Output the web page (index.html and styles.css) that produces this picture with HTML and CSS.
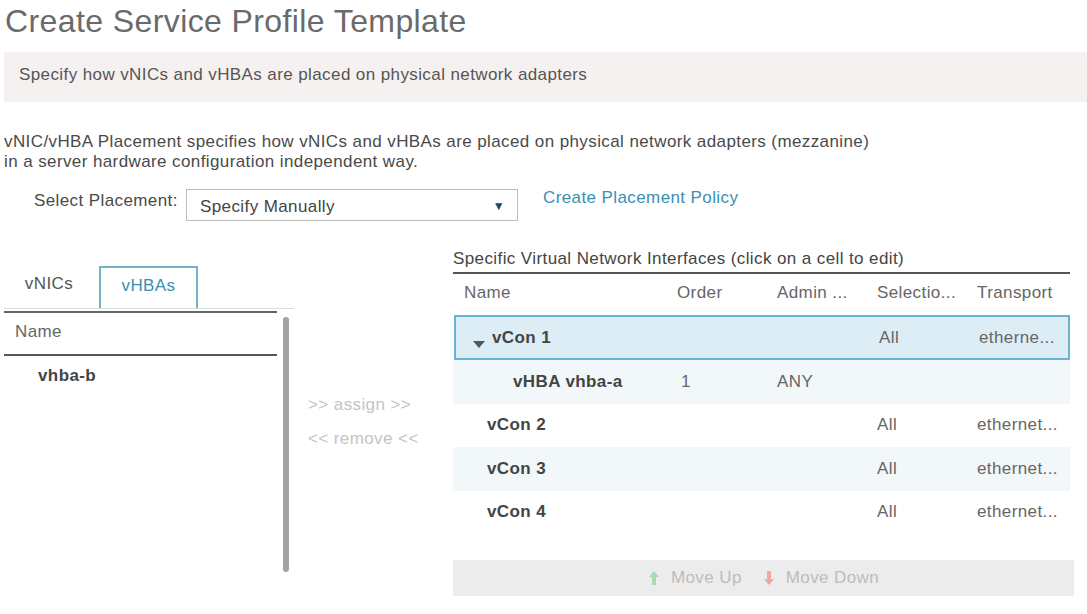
FILE: index.html
```html
<!DOCTYPE html>
<html>
<head>
<meta charset="utf-8">
<link rel="stylesheet" href="styles.css">
</head>
<body>
<div class="page">
  <h1 class="title">Create Service Profile Template</h1>
  <div class="banner">Specify how vNICs and vHBAs are placed on physical network adapters</div>
  <p class="desc">vNIC/vHBA Placement specifies how vNICs and vHBAs are placed on physical network adapters (mezzanine)<br>in a server hardware configuration independent way.</p>
  <div class="placement">
    <span class="plabel">Select Placement:</span>
    <div class="select"><span>Specify Manually</span><span class="caret">&#9660;</span></div>
    <a class="link">Create Placement Policy</a>
  </div>
  <div class="main">
    <div class="left">
      <div class="tabs">
        <div class="tab">vNICs</div>
        <div class="tab active">vHBAs</div>
      </div>
      <div class="listwrap">
        <div class="list">
          <div class="lhead">Name</div>
          <div class="litem">vhba-b</div>
        </div>
        <div class="scroll"></div>
      </div>
    </div>
    <div class="mid">
      <div class="mbtn">&gt;&gt; assign &gt;&gt;</div>
      <div class="mbtn">&lt;&lt; remove &lt;&lt;</div>
    </div>
    <div class="right">
      <div class="rtitle">Specific Virtual Network Interfaces (click on a cell to edit)</div>
      <div class="table">
        <div class="row head">
          <div class="c name">Name</div><div class="c">Order</div><div class="c">Admin ...</div><div class="c">Selectio...</div><div class="c">Transport</div>
        </div>
        <div class="row sel">
          <div class="c name b"><span class="tri"></span>vCon 1</div><div class="c"></div><div class="c"></div><div class="c">All</div><div class="c">etherne...</div>
        </div>
        <div class="row alt">
          <div class="c name b sub">vHBA vhba-a</div><div class="c one">1</div><div class="c">ANY</div><div class="c"></div><div class="c"></div>
        </div>
        <div class="row">
          <div class="c name b">vCon 2</div><div class="c"></div><div class="c"></div><div class="c">All</div><div class="c">ethernet...</div>
        </div>
        <div class="row alt">
          <div class="c name b">vCon 3</div><div class="c"></div><div class="c"></div><div class="c">All</div><div class="c">ethernet...</div>
        </div>
        <div class="row">
          <div class="c name b">vCon 4</div><div class="c"></div><div class="c"></div><div class="c">All</div><div class="c">ethernet...</div>
        </div>
      </div>
      <div class="movebar">
        <span class="mv"><svg width="12" height="16" viewBox="0 0 12 16"><path d="M6 1 L11 7 H8 V15 H4 V7 H1 Z" fill="#a6dcae"/></svg>Move Up</span>
        <span class="mv"><svg width="12" height="16" viewBox="0 0 12 16"><path d="M4 1 H8 V9 H11 L6 15 L1 9 H4 Z" fill="#f0a6a2"/></svg>Move Down</span>
      </div>
    </div>
  </div>
</div>
</body>
</html>
```

FILE: styles.css
```css
* { box-sizing: border-box; }
body {
  margin: 0;
  background: #fff;
  font-family: "Liberation Sans", Arial, sans-serif;
  color: #555;
  font-size: 17px;
  letter-spacing: 0.4px;
}
.page { padding: 0 0 0 4px; width: 1087px; }
.title {
  margin: 0;
  padding: 3px 0 0 1px;
  height: 52px;
  font-weight: normal;
  font-size: 32px;
  line-height: 36px;
  color: #6a6a6a;
}
.banner {
  height: 50px;
  background: #f5f1f1;
  padding: 0 0 0 15px;
  line-height: 46px;
  color: #555;
}
.desc {
  margin: 0;
  padding-top: 30px;
  line-height: 20px;
  color: #4a4a4a;
}
.placement {
  display: flex;
  align-items: flex-start;
  margin-top: 17px;
  height: 40px;
}
.plabel { margin-left: 30px; width: 152px; line-height: 24px; color: #4a4a4a; }
.select {
  width: 332px;
  height: 32px;
  border: 1px solid #bbb;
  display: flex;
  justify-content: space-between;
  align-items: center;
  padding: 4px 12px 0 13px;
  color: #444;
}
.caret { font-size: 12px; color: #1f4766; padding-bottom: 3px; }
.link { margin-left: 25px; color: #3b8fb5; line-height: 18px; }
.main { display: flex; margin-top: 22px; }
.left { width: 290px; padding-top: 15px; }
.tabs { display: flex; height: 43px; border-bottom: 1px solid #ddd; }
.tab {
  width: 95px;
  text-align: center;
  line-height: 36px;
  padding-right: 5px;
  color: #555;
}
.tab.active {
  width: 99px;
  border: 2px solid #72b3ca;
  border-bottom: none;
  color: #3d8db0;
  padding-right: 0;
}
.listwrap { display: flex; margin-top: 2px; }
.list { width: 273px; border-top: 2px solid #666; }
.lhead { height: 43px; line-height: 38px; padding-left: 11px; border-bottom: 2px solid #555; color: #666; }
.litem { padding-left: 34px; line-height: 40px; font-weight: bold; color: #444; }
.scroll {
  width: 6px;
  height: 255px;
  margin: 6px 0 0 6px;
  background: #a3a3a3;
  border-radius: 3px;
}
.mid { width: 159px; padding: 145px 0 0 14px; }
.mbtn { color: #c4c4c4; height: 34px; line-height: 18px; }
.right { width: 622px; }
.rtitle { height: 18px; line-height: 18px; color: #444; margin-top: -1px; }
.table { border-top: 2px solid #555; width: 617px; margin-top: 4px; }
.row { display: flex; height: 43.5px; align-items: center; }
.row.head { height: 41px; color: #666; padding-bottom: 4px; }
.c { width: 100px; padding-left: 11px; color: #666; white-space: nowrap; }
.c.name { width: 213px; }
.b { font-weight: bold; color: #444; }
.one { padding-left: 15px; }
.row.sel {
  background: #dcedf5;
  border: 2px solid #68b4d2;
  height: 45px;
  margin-left: 1px;
}
.row.sel .c.name { width: 212px; padding-left: 17px; }
.tri {
  display: inline-block;
  width: 0; height: 0;
  border-left: 6px solid transparent;
  border-right: 6px solid transparent;
  border-top: 7px solid #555;
  margin-right: 7px;
  vertical-align: -5px;
}
.row.alt { background: #f2f7fa; }
.row:not(.sel):not(.head) .c.name { padding-left: 34px; }
.row:not(.sel):not(.head) .c.name.sub { padding-left: 60px; }
.movebar {
  margin-top: 26px;
  width: 621px;
  height: 36px;
  background: #ececec;
  display: flex;
  justify-content: center;
  align-items: center;
  gap: 21px;
  color: #bcbcbc;
}
.mv { display: flex; align-items: center; gap: 11px; }
```
